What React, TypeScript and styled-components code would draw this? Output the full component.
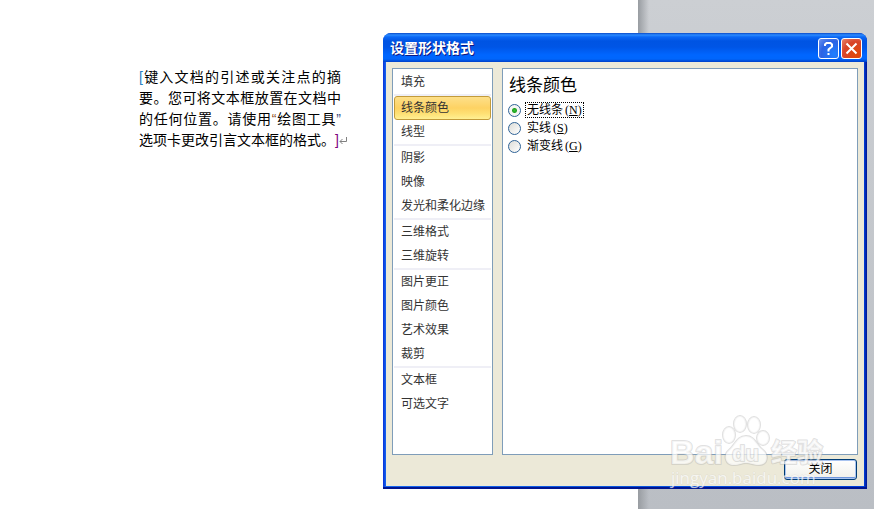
import React, { useState } from "react";
import styled, { createGlobalStyle, css } from "styled-components";

const GlobalStyle = createGlobalStyle`
  * { box-sizing: border-box; }
  body {
    margin: 0;
    font-family: "Liberation Sans", "Noto Sans CJK SC", sans-serif;
    font-size: 12px;
    color: #000;
    text-spacing-trim: space-all;
  }
`;

const Workspace = styled.main`
  position: relative;
  display: flex;
  min-height: 100vh;
  overflow: hidden;
  background: linear-gradient(#cccfd3, #babec4);
`;

const Sheet = styled.article`
  flex: 0 0 73%;
  padding: 67px 0 0 139px;
  background: #fff;
`;

const Backdrop = styled.div`
  flex: 1;
  background: linear-gradient(90deg, #989ca1, rgba(160, 164, 170, 0) 11px);
`;

const Quote = styled.p`
  margin: 0;
  max-width: 212px;
  font-size: 14px;
  line-height: 21px;
`;

const QuoteLine = styled.span<{ $last?: boolean }>`
  display: block;
  width: ${(p) => (p.$last ? "auto" : "202px")};
  white-space: nowrap;
  text-align-last: ${(p) => (p.$last ? "left" : "justify")};
`;

const Mark = styled.span<{ $color: string }>`
  color: ${(p) => p.$color};
`;

const ReturnIcon = styled.svg`
  width: 9px;
  height: 8px;
  fill: none;
  stroke: #808080;
`;

const Dialog = styled.section`
  position: absolute;
  top: 33px;
  right: 7px;
  bottom: 20px;
  left: 383px;
  display: flex;
  flex-direction: column;
  padding: 0 3px 3px;
  border-radius: 8px 8px 0 0;
  background: linear-gradient(90deg, #0831d9, #1666f0 3px, #0855dd 50%, #0040dd calc(100% - 3px), #00138c);
  box-shadow: inset 0 -2px 0 #001590;
`;

const TitleBar = styled.header`
  display: flex;
  flex: none;
  align-items: center;
  gap: 2px;
  height: 29px;
  margin: 0 -3px;
  padding: 2px 5px 0 7px;
  border-radius: 8px 8px 0 0;
  background: linear-gradient(#0a4ac8 0, #2b8bff 2px, #0b68f5 4px, #0054e3 8px, #0055e6 14px, #0066ff 22px, #0066fc 26px, #0040c8 29px);
`;

const Title = styled.h1`
  flex: 1;
  margin: 0;
  padding-bottom: 2px;
  color: #fff;
  font-size: 14px;
  line-height: 20px;
  text-shadow: 1px 1px 0 #0a1883;
`;

const CaptionButton = styled.button<{ $danger?: boolean }>`
  display: grid;
  place-items: center;
  width: 21px;
  height: 21px;
  padding: 0;
  border: 1px solid #fff;
  border-radius: 3px;
  background: ${(p) =>
    p.$danger
      ? "radial-gradient(circle at 75% 80%, #e04808, #d8452a 60%, #e9866f)"
      : "radial-gradient(circle at 80% 80%, #2080ff, #2c63e4 60%, #6f94ee)"};

  svg {
    width: 19px;
    height: 19px;
    fill: none;
    stroke: #fff;
    stroke-width: 2;
  }
`;

const Body = styled.div`
  display: flex;
  flex: 1;
  flex-direction: column;
  gap: 4px;
  min-height: 0;
  padding: 6px;
  background: #ece9d8;
`;

const Panels = styled.div`
  display: grid;
  flex: 1;
  grid-template-columns: 101px 1fr;
  gap: 9px;
  min-height: 0;
`;

const panel = css`
  border: 1px solid #7f9db9;
  background: #fff;
`;

const Categories = styled.nav`
  ${panel}
  padding: 1px;
`;

const Group = styled.div`
  & + & {
    border-top: 2px solid #efeff6;
  }
`;

const Category = styled.button<{ $active: boolean }>`
  display: block;
  width: 100%;
  height: 24px;
  padding: 0 6px;
  border: 1px solid ${(p) => (p.$active ? "#c29b3a" : "transparent")};
  border-radius: 3px;
  background: ${(p) =>
    p.$active ? "linear-gradient(#fde08a, #fdd263 50%, #fee074 75%, #fff093)" : "none"};
  color: #333;
  font: inherit;
  line-height: 20px;
  text-align: left;
  white-space: nowrap;
`;

const Settings = styled.fieldset`
  ${panel}
  min-width: 0;
  margin: 0;
  padding: 5px;
`;

const Heading = styled.h2`
  margin: 0 0 3px;
  padding-left: 1px;
  font-size: 17px;
  font-weight: 400;
  line-height: 24px;
`;

const Option = styled.label`
  display: flex;
  align-items: center;
  gap: 4px;
  height: 18px;
`;

const Radio = styled.input`
  appearance: none;
  width: 13px;
  height: 13px;
  margin: 0;
  border: 1px solid #2f6396;
  border-radius: 50%;
  background: linear-gradient(135deg, #dcdcd7, #fff);

  &:checked {
    background: radial-gradient(circle, #35c335 0, #21a121 2px, #f5f5f3 3px);
  }
`;

const OptionText = styled.span<{ $focused: boolean }>`
  padding: 0 1px;
  border: 1px dotted ${(p) => (p.$focused ? "#000" : "transparent")};
  line-height: 14px;
`;

const AccessKey = styled.span`
  margin-left: 2px;
  font-family: "Liberation Serif", serif;
`;

const Footer = styled.footer`
  display: flex;
  justify-content: flex-end;
  padding-right: 1px;
`;

const CloseButton = styled.button`
  width: 73px;
  height: 21px;
  padding: 0;
  border: 1px solid #003c74;
  border-radius: 3px;
  background: linear-gradient(#fff, #f0f0ea);
  box-shadow: inset 0 0 0 1px #a9c4f0, inset 0 -2px 0 #6f96dc;
  color: #000;
  font: inherit;
  line-height: 17px;
`;

const Watermark = styled.svg`
  position: absolute;
  right: 44px;
  bottom: 17px;
  width: 160px;
  height: 80px;
  overflow: visible;
  pointer-events: none;
  fill: rgba(255, 255, 255, 0.7);
  stroke: rgba(175, 175, 175, 0.4);
  stroke-width: 2;
  stroke-linejoin: round;
  font-family: "Liberation Sans", "Noto Sans CJK SC", sans-serif;
  paint-order: stroke;
`;

const WatermarkUrl = styled.text`
  font-family: "Open Sans", sans-serif;
  font-size: 17px;
  stroke: rgba(175, 175, 175, 0.2);
  stroke-width: 1px;
`;

const groups = [
  ["填充"],
  ["线条颜色", "线型"],
  ["阴影", "映像", "发光和柔化边缘"],
  ["三维格式", "三维旋转"],
  ["图片更正", "图片颜色", "艺术效果", "裁剪"],
  ["文本框", "可选文字"],
];

const options = [
  { label: "无线条", accessKey: "N" },
  { label: "实线", accessKey: "S" },
  { label: "渐变线", accessKey: "G" },
];

export default function App() {
  const [category, setCategory] = useState("线条颜色");
  const [line, setLine] = useState("N");

  return (
    <>
      <GlobalStyle />
      <Workspace>
        <Sheet>
          <Quote>
            <QuoteLine><Mark $color="#2a7fc0">[</Mark>键入文档的引述或关注点的摘</QuoteLine>
            <QuoteLine>要。您可将文本框放置在文档中</QuoteLine>
            <QuoteLine>
              的任何位置。请使用<Mark $color="#8a4a20">“</Mark>绘图工具<Mark $color="#3a4a80">”</Mark>
            </QuoteLine>
            <QuoteLine $last>
              选项卡更改引言文本框的格式。<Mark $color="#800080">]</Mark>
              <ReturnIcon viewBox="0 0 9 8" aria-hidden="true">
                <path d="M7.500 0V4.500H1M3.500 2L1 4.500L3.500 7" />
              </ReturnIcon>
            </QuoteLine>
          </Quote>
        </Sheet>
        <Backdrop />

        <Dialog role="dialog" aria-labelledby="dialog-title">
          <TitleBar>
            <Title id="dialog-title">设置形状格式</Title>
            <CaptionButton aria-label="帮助">
              <svg viewBox="0 0 19 19"><path d="M6 7V5.500L7.500 4H11.500L13 5.500V7.500L9.500 10.500V12.500M9.500 14V16" /></svg>
            </CaptionButton>
            <CaptionButton $danger aria-label="关闭窗口">
              <svg viewBox="0 0 19 19"><path d="M4.500 4.500L14.500 14.500M14.500 4.500L4.500 14.500" /></svg>
            </CaptionButton>
          </TitleBar>
          <Body>
            <Panels>
              <Categories>
                {groups.map((items) => (
                  <Group key={items[0]}>
                    {items.map((item) => (
                      <Category key={item} $active={item === category} onClick={() => setCategory(item)}>
                        {item}
                      </Category>
                    ))}
                  </Group>
                ))}
              </Categories>
              <Settings aria-labelledby="settings-title">
                <Heading id="settings-title">线条颜色</Heading>
                {options.map(({ label, accessKey }) => (
                  <Option key={accessKey}>
                    <Radio
                      type="radio"
                      name="line"
                      checked={line === accessKey}
                      onChange={() => setLine(accessKey)}
                    />
                    <OptionText $focused={line === accessKey}>
                      {label}
                      <AccessKey>(<u>{accessKey}</u>)</AccessKey>
                    </OptionText>
                  </Option>
                ))}
              </Settings>
            </Panels>
            <Footer>
              <CloseButton>关闭</CloseButton>
            </Footer>
          </Body>
        </Dialog>

        <Watermark viewBox="0 0 160 80" aria-hidden="true">
          <ellipse cx="59" cy="23" rx="6" ry="8" />
          <ellipse cx="70" cy="12" rx="6" ry="8" />
          <ellipse cx="84" cy="13" rx="6" ry="8" />
          <ellipse cx="93" cy="26" rx="6" ry="7" />
          <path d="M76 24C67 24 65 33 59 38C53 43 55 53 64 53C70 53 71 51 76 51C81 51 83 53 89 53C98 53 99 43 93 38C86 33 85 24 76 24Z" />
          <text x="0" y="52" fontSize="34" fontWeight="700">Bai</text>
          <text x="62" y="49" fontSize="22" fontWeight="700">du</text>
          <text x="101" y="50" fontSize="26" fontWeight="700">经验</text>
          <WatermarkUrl x="1" y="72">jingyan.baidu.com</WatermarkUrl>
        </Watermark>
      </Workspace>
    </>
  );
}
